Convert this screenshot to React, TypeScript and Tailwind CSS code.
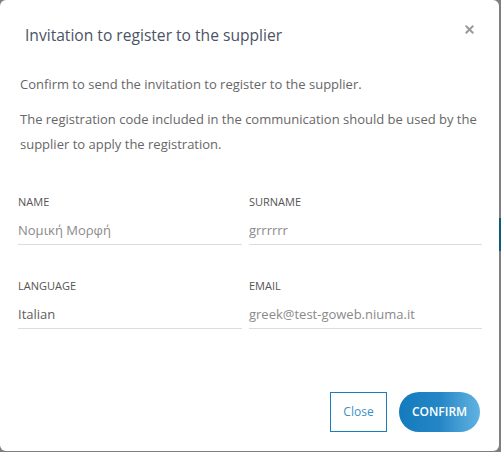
import { X } from "lucide-react";

interface FieldProps {
  label: string;
  value: string;
  dark?: boolean;
}

function Field({ label, value, dark }: Readonly<FieldProps>) {
  return (
    <div className="flex flex-col">
      <span className="text-[11px] leading-[14px] text-[#555]">{label}</span>
      <span
        className={`mt-[12px] text-[13px] leading-[18px] ${dark ? "text-[#5e5e5e]" : "text-[#8a8a8a]"}`}
      >
        {value}
      </span>
      <div className="mt-[5px] h-px bg-[#dcdcdc]" />
    </div>
  );
}

export default function App() {
  return (
    <div
      className="flex h-[452px] w-[501px] bg-[#7f7f7f]"
      style={{ fontFamily: '"Open Sans", "Noto Sans", sans-serif' }}
    >
      <div className="flex h-[451px] w-[499px] flex-col rounded-[6px] bg-white">
        {/* Header */}
        <div className="flex items-start justify-between pl-[25px] pr-[23px] pt-[24px]">
          <h3 className="text-[15.6px] leading-[22px] text-[#4b5365]">
            Invitation to register to the supplier
          </h3>
          <X className="-mt-[1px] h-[13px] w-[13px] text-[#999]" strokeWidth={3.5} />
        </div>

        {/* Body */}
        <div className="px-[20px] pt-[26px] text-[13px] leading-[25px] text-[#676767]">
          <p>Confirm to send the invitation to register to the supplier.</p>
          <p className="mt-[10px]">
            The registration code included in the communication should be used by the
            supplier to apply the registration.
          </p>
        </div>

        <div className="mt-[38px] grid grid-cols-[224px_233px] gap-x-[7px] gap-y-[34px] pl-[18px]">
          <Field label="NAME" value="Νομική Μορφή" />
          <Field label="SURNAME" value="grrrrrr" />
          <Field label="LANGUAGE" value="Italian" dark />
          <Field label="EMAIL" value="greek@test-goweb.niuma.it" />
        </div>

        {/* Footer */}
        <div className="mt-auto flex justify-end gap-[12px] pb-[19px] pr-[19px]">
          <button className="h-[40px] w-[57px] border border-[#1a7fb8] bg-white text-[12px] text-[#3b8fc4]">
            Close
          </button>
          <button className="h-[40px] w-[81px] rounded-full bg-gradient-to-r from-[#137bbd] via-[#2486c6] to-[#60b3e2] text-[12px] font-semibold text-white">
            CONFIRM
          </button>
        </div>
      </div>
      <div className="flex w-[2px] flex-col">
        <div className="mt-[218px] h-[33px] bg-[#0f5a78]" />
      </div>
    </div>
  );
}
